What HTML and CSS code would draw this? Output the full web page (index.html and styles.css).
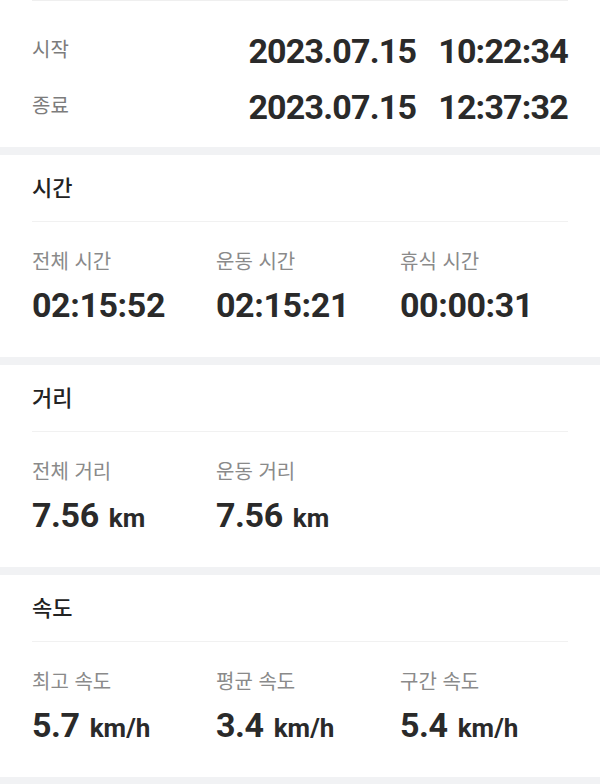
FILE: index.html
```html
<!DOCTYPE html>
<html lang="ko">
<head>
    <meta charset="UTF-8">
    <meta name="viewport" content="width=device-width, initial-scale=1.0">
    <title>운동 기록</title>
    <link rel="stylesheet" href="styles.css">
</head>
<body>
    <div class="record">
        <section class="period">
            <div class="period-row">
                <span class="period-label">시작</span>
                <span class="period-value"><span>2023.07.15</span><span class="clock">10:22:34</span></span>
            </div>
            <div class="period-row">
                <span class="period-label">종료</span>
                <span class="period-value"><span>2023.07.15</span><span class="clock">12:37:32</span></span>
            </div>
        </section>

        <section class="card">
            <h3 class="card-title">시간</h3>
            <div class="stats">
                <div class="stat">
                    <div class="stat-label">전체 시간</div>
                    <div class="stat-value">02:15:52</div>
                </div>
                <div class="stat">
                    <div class="stat-label">운동 시간</div>
                    <div class="stat-value">02:15:21</div>
                </div>
                <div class="stat">
                    <div class="stat-label">휴식 시간</div>
                    <div class="stat-value">00:00:31</div>
                </div>
            </div>
        </section>

        <section class="card">
            <h3 class="card-title">거리</h3>
            <div class="stats">
                <div class="stat">
                    <div class="stat-label">전체 거리</div>
                    <div class="stat-value">7.56 <span class="unit">km</span></div>
                </div>
                <div class="stat">
                    <div class="stat-label">운동 거리</div>
                    <div class="stat-value">7.56 <span class="unit">km</span></div>
                </div>
            </div>
        </section>

        <section class="card">
            <h3 class="card-title">속도</h3>
            <div class="stats">
                <div class="stat">
                    <div class="stat-label">최고 속도</div>
                    <div class="stat-value">5.7 <span class="unit">km/h</span></div>
                </div>
                <div class="stat">
                    <div class="stat-label">평균 속도</div>
                    <div class="stat-value">3.4 <span class="unit">km/h</span></div>
                </div>
                <div class="stat">
                    <div class="stat-label">구간 속도</div>
                    <div class="stat-value">5.4 <span class="unit">km/h</span></div>
                </div>
            </div>
        </section>
    </div>
</body>
</html>
```

FILE: styles.css
```css
body {
    margin: 0;
    padding: 0;
    background-color: #f1f2f4;
    font-family: "Noto Sans CJK KR", "Noto Sans", sans-serif;
    color: #2a2a2a;
}
.record {
    display: flex;
    flex-direction: column;
    gap: 8px;
}
.period {
    background-color: white;
    padding: 23px 32px 12px;
    height: 112px;
}
.period::before {
    content: "";
    display: block;
    height: 1px;
    background-color: #efefef;
    margin-top: -23px;
    margin-bottom: 22px;
}
.period-row {
    display: flex;
    justify-content: space-between;
    align-items: center;
    height: 56px;
}
.period-label {
    font-size: 20px;
    color: #7c7c7c;
    padding-bottom: 6px;
}
.period-value {
    font-family: Roboto, "Liberation Sans", sans-serif;
    font-weight: bold;
    font-size: 34px;
    letter-spacing: -0.8px;
    line-height: 40px;
}
.period-value .clock {
    margin-left: 22px;
}
.card {
    background-color: white;
    padding: 0 32px;
    height: 202px;
}
.card-title {
    margin: 0;
    height: 66px;
    line-height: 62px;
    font-size: 22px;
    font-weight: 500;
    color: #222;
    border-bottom: 1px solid #f1f1f1;
}
.stats {
    display: grid;
    grid-template-columns: 184px 184px 1fr;
    padding-top: 27px;
}
.stat-label {
    font-size: 20px;
    line-height: 24px;
    color: #8a8a8a;
}
.stat-value {
    margin-top: 12px;
    font-family: Roboto, "Liberation Sans", sans-serif;
    font-weight: bold;
    font-size: 34px;
    line-height: 40px;
    letter-spacing: -0.4px;
    color: #2a2a2a;
}
.unit {
    font-size: 26px;
    letter-spacing: 0;
    margin-left: 2px;
}
```
